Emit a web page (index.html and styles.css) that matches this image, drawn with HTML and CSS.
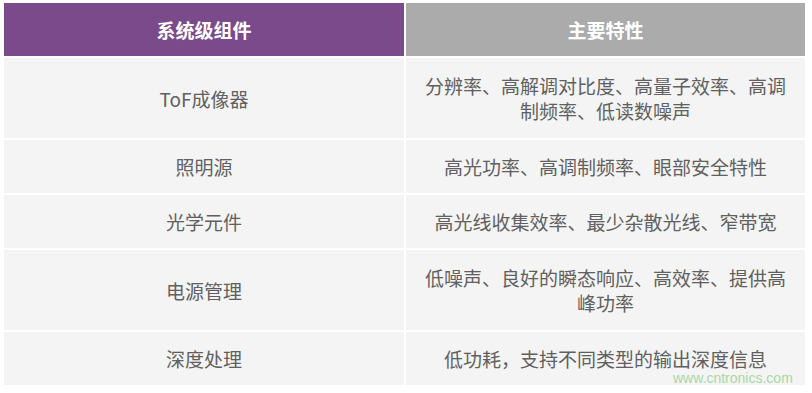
FILE: index.html
```html
<!DOCTYPE html>
<html lang="zh">
<head>
<meta charset="utf-8">
<link rel="stylesheet" href="styles.css">
</head>
<body>
<div class="page">
  <div class="table">
    <div class="cell head head-left">系统级组件</div>
    <div class="cell head head-right">主要特性</div>

    <div class="cell">ToF成像器</div>
    <div class="cell text tall">分辨率、高解调对比度、高量子效率、高调制频率、低读数噪声</div>

    <div class="cell">照明源</div>
    <div class="cell text">高光功率、高调制频率、眼部安全特性</div>

    <div class="cell">光学元件</div>
    <div class="cell text">高光线收集效率、最少杂散光线、窄带宽</div>

    <div class="cell">电源管理</div>
    <div class="cell text tall">低噪声、良好的瞬态响应、高效率、提供高峰功率</div>

    <div class="cell">深度处理</div>
    <div class="cell text">低功耗，支持不同类型的输出深度信息</div>
  </div>
  <div class="watermark">www.cntronics.com</div>
</div>
</body>
</html>
```
FILE: styles.css
```css
html, body {
  margin: 0;
  padding: 0;
  background: #ffffff;
}

.page {
  position: relative;
  width: 812px;
  height: 393px;
  padding: 3px 0 0 4px;
  box-sizing: border-box;
}

.table {
  display: grid;
  grid-template-columns: 400px 399px;
  gap: 2px;
}

.cell {
  background: #f4f4f4;
  color: #606060;
  font-family: "Noto Sans CJK SC", "Microsoft YaHei", sans-serif;
  font-size: 19px;
  line-height: 25px;
  padding: 14px 16px;
  text-align: center;
  display: flex;
  align-items: center;
  justify-content: center;
}

.cell.tall {
  padding-top: 15px;
  padding-bottom: 15px;
}

.head {
  color: #ffffff;
  font-weight: bold;
}

.head-left {
  background: #7b4a8a;
}

.head-right {
  background: #ababab;
}

.watermark {
  position: absolute;
  left: 673px;
  top: 370px;
  font-family: "Liberation Sans", Arial, sans-serif;
  font-size: 14px;
  line-height: 16px;
  color: #a9d8a4;
}
```
